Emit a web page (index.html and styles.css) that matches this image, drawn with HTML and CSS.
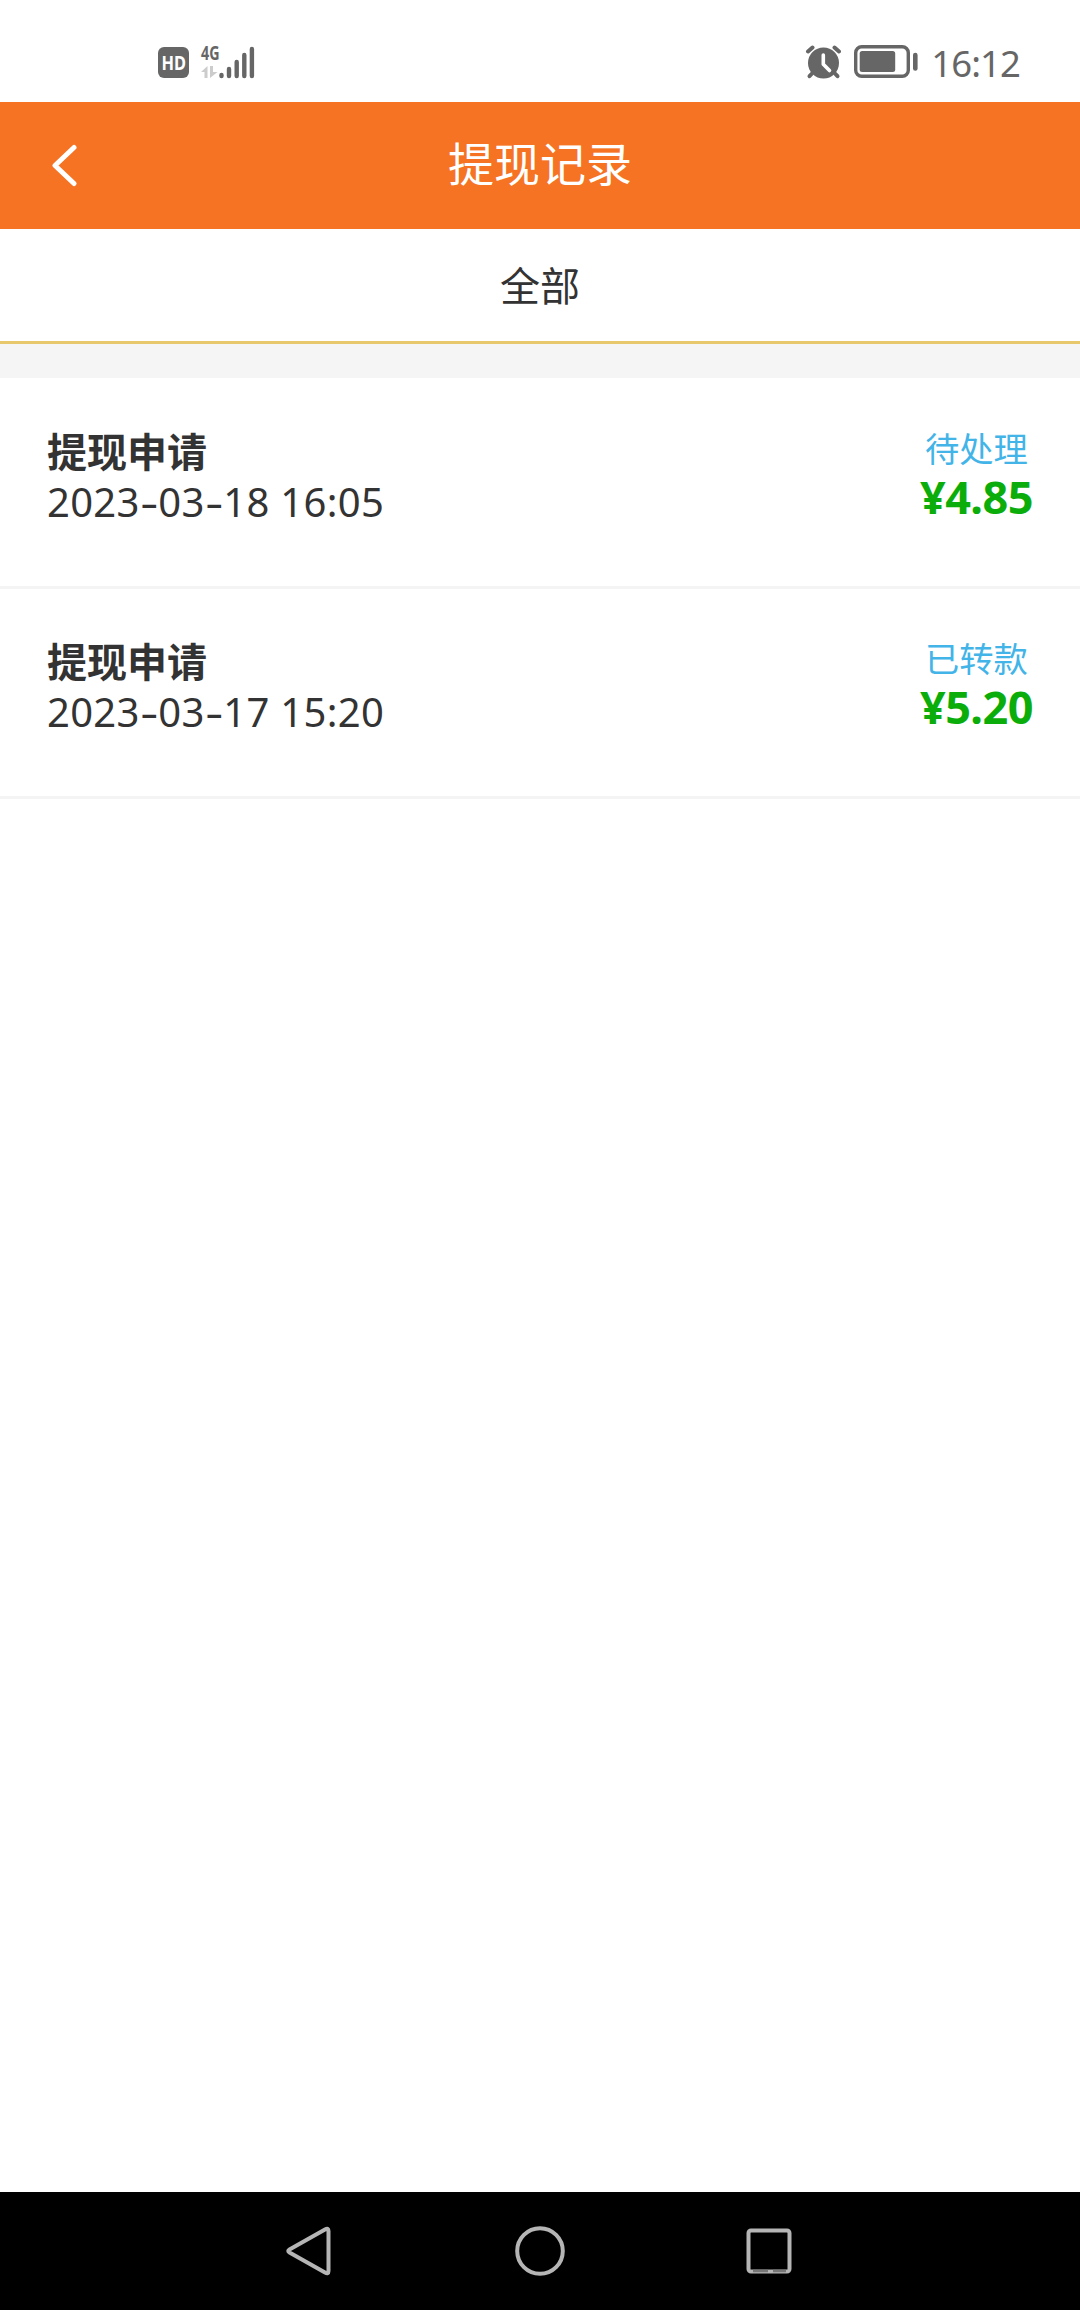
FILE: index.html
```html
<!DOCTYPE html>
<html lang="zh-CN">
<head>
<meta charset="utf-8">
<title>提现记录</title>
<link rel="stylesheet" href="styles.css">
</head>
<body>
<div class="screen">
  <div class="status">
    <svg class="status-left" width="100" height="46" viewBox="0 -10 100 46">
      <rect x="0" y="3" width="31" height="31" rx="6" fill="#666"/>
      <text x="3.5" y="25.500" class="hd" textLength="24.5" lengthAdjust="spacingAndGlyphs">HD</text>
      <text x="43" y="15.5" class="net" textLength="18.5" lengthAdjust="spacingAndGlyphs">4G</text>
      <path d="M43 28l6.500-6v12h-3v-6zM52 22h3v6h4.500l-7.500 6z" fill="#ccc"/>
      <path d="M63.500 31v1M71 25v7M78.700 18v14M86.300 11v21M93.900 5v27" fill="none" stroke="#666" stroke-width="4.400" stroke-linecap="round"/>
    </svg>
    <div class="status-right">
      <svg width="36" height="36" viewBox="0 0 36 36">
        <circle cx="18.500" cy="19" r="15.500" fill="#666"/>
        <path d="M3 7.500l4.500-4M29.500 3.500l4.500 4" stroke="#666" stroke-width="4" stroke-linecap="round"/>
        <path d="M7 29.500l-2.500 2.700M30 29.500l2.500 2.700" stroke="#666" stroke-width="4" stroke-linecap="round"/>
        <path d="M18.300 11v9.200l6.200 6.300" fill="none" stroke="#fff" stroke-width="3.600" stroke-linecap="round" stroke-linejoin="round"/>
      </svg>
      <svg width="64" height="36" viewBox="0 0 64 36">
        <rect x="1.700" y="2.700" width="52.600" height="29.600" rx="6" fill="none" stroke="#666" stroke-width="3.400"/>
        <rect x="5.700" y="7" width="35.500" height="21" rx="2.500" fill="#666"/>
        <rect x="59" y="8.700" width="4.600" height="18" rx="2.300" fill="#666"/>
      </svg>
      <span class="time">16:12</span>
    </div>
  </div>
  <header class="header">
    <svg class="back" width="30" height="44" viewBox="0 0 30 44"><path d="M25 3.500L6 21.500 25 39.500" fill="none" stroke="#fff" stroke-width="5" stroke-linecap="round" stroke-linejoin="round"/></svg>
    <h1 class="title">提现记录</h1>
  </header>
  <div class="tab">全部</div>
  <main class="list">
    <div class="row">
      <div class="info">
        <div class="name">提现申请</div>
        <div class="date">2023<span class="dash">-</span>03<span class="dash">-</span>18 16:05</div>
      </div>
      <div class="result">
        <div class="state">待处理</div>
        <div class="amount">¥4.85</div>
      </div>
    </div>
    <div class="row">
      <div class="info">
        <div class="name">提现申请</div>
        <div class="date">2023<span class="dash">-</span>03<span class="dash">-</span>17 15:20</div>
      </div>
      <div class="result">
        <div class="state">已转款</div>
        <div class="amount">¥5.20</div>
      </div>
    </div>
  </main>
  <nav class="nav">
    <svg width="52" height="52" viewBox="0 0 52 52"><path d="M40 4.500Q43.500 2.500 43.500 6V46Q43.500 49.500 40 47.500L4.500 27.500Q2 26 4.500 24.500Z" fill="none" stroke="#b5b5b5" stroke-width="4"/></svg>
    <svg width="52" height="52" viewBox="0 0 52 52"><circle cx="26" cy="26" r="22.800" fill="none" stroke="#b5b5b5" stroke-width="4"/></svg>
    <svg width="52" height="52" viewBox="0 0 52 52"><rect x="5.500" y="5.500" width="41" height="41" rx="2.500" fill="none" stroke="#b5b5b5" stroke-width="4"/><path d="M10 46h15M30 46h13" stroke="#777" stroke-width="2.500"/></svg>
  </nav>
</div>
</body>
</html>
```
FILE: styles.css
```css
* { box-sizing: border-box; }
body {
  margin: 0;
  background: #fff;
  color: #333;
  font-family: "Noto Sans", "Noto Sans CJK SC", sans-serif;
}
.screen {
  display: flex;
  flex-direction: column;
  width: 1080px;
  height: 2310px;
}
.status {
  display: flex;
  justify-content: space-between;
  height: 102px;
  padding: 34px 60px 0 158px;
}
.status-right {
  display: flex;
  padding-top: 10px;
}
.status-right svg { flex: none; }
.status-right svg + svg { margin-left: 13px; }
.time {
  margin-left: 13px;
  color: #666;
  font-size: 36.5px;
  line-height: 38px;
  letter-spacing: -0.9px;
}
.hd { fill: #fff; font: 700 20px "Noto Sans", sans-serif; }
.net { fill: #666; font: 700 20px "Noto Sans", sans-serif; }
.header {
  display: grid;
  grid-template-columns: 1fr auto 1fr;
  align-items: center;
  height: 127px;
  background: #f57322;
}
.back { margin-left: 49px; }
.title {
  margin: 0;
  padding-bottom: 9px;
  color: #fff;
  font: 400 46px/60px "Noto Sans CJK SC", sans-serif;
}
.tab {
  height: 115px;
  border-bottom: 3px solid #e8c86c;
  font: 400 40px/111px "Noto Sans CJK SC", sans-serif;
  text-align: center;
}
.list {
  flex: 1;
  border-top: 34px solid #f5f5f5;
}
.row {
  display: flex;
  justify-content: space-between;
  height: 210px;
  padding: 47px 47px 0;
  border-bottom: 3px solid #f4f4f4;
}
.row:first-child { height: 211px; padding-top: 48px; }
.name {
  margin-bottom: 4px;
  font: 700 40px/48px "Noto Sans CJK SC", sans-serif;
}
.date {
  font-size: 40px;
  line-height: 48px;
  letter-spacing: 0.3px;
  white-space: nowrap;
}
.dash {
  display: inline-block;
  width: 18.6px;
  letter-spacing: 0;
  text-align: center;
  transform: scaleX(1.4);
}
.result { text-align: center; }
.state {
  margin-bottom: 5px;
  color: #42b4e8;
  font: 400 34.3px/42px "Noto Sans CJK SC", sans-serif;
}
.amount {
  color: #0aad0a;
  font-size: 45px;
  font-weight: 700;
  line-height: 48px;
  letter-spacing: -0.5px;
}
.nav {
  display: flex;
  justify-content: center;
  gap: 177px;
  height: 118px;
  padding-top: 33px;
  background: #000;
}
```
